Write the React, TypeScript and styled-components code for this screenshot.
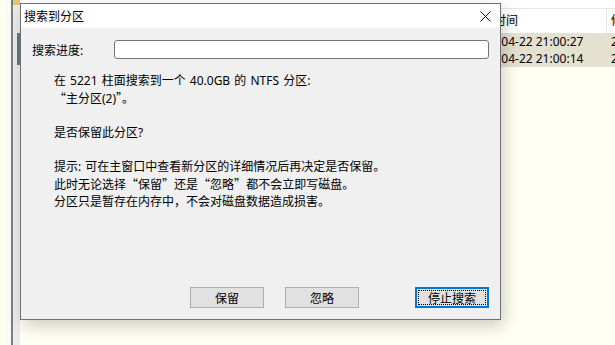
import React from "react";
import styled, { createGlobalStyle } from "styled-components";

const GlobalStyle = createGlobalStyle`
  html, body {
    margin: 0;
    padding: 0;
    width: 615px;
    height: 345px;
    overflow: hidden;
    background: #fffff4;
    font-family: "Noto Sans", "Noto Sans CJK SC", sans-serif;
    font-size: 12px;
    color: #000;
  }
`;

const Desktop = styled.div`
  position: relative;
  display: flex;
  width: 615px;
  height: 345px;
  overflow: hidden;
`;

const LeftPane = styled.div`
  width: 11px;
  background: linear-gradient(to right, #fffff0 0 6px, #fbfbf6 6px);
`;

const Divider = styled.div`
  width: 2px;
  background: #7d7d7d;
`;

const Gutter = styled.div`
  width: 7px;
  background: #ececec;
  display: flex;
  flex-direction: column;
`;

const GutterIcon = styled.div`
  height: 5px;
  width: 7px;
  background: #e7c96a;
`;

const GutterMark = styled.div`
  margin: 28px 0 0 4px;
  height: 32px;
  width: 3px;
  background: #5c7f7c;
`;

const ListView = styled.div`
  flex: 1;
  display: flex;
  flex-direction: column;
  background: #fffff4;
`;

const TopStrip = styled.div`
  height: 8px;
  background: #fff;
  border-bottom: 1px solid #e6e6e6;
`;

const Row = styled.div<{ $header?: boolean }>`
  display: grid;
  grid-template-columns: 446px 141px 1fr;
  height: ${(p) => (p.$header ? "24px" : "17px")};
  line-height: ${(p) => (p.$header ? "24px" : "17px")};
  background: ${(p) => (p.$header ? "#fff" : "#e4e1d1")};
  white-space: nowrap;
`;

const Cell = styled.div<{ $sep?: boolean }>`
  padding-left: 4px;
  overflow: hidden;
  border-right: ${(p) => (p.$sep ? "1px solid #e5e5e5" : "none")};
`;

const Dialog = styled.div`
  position: absolute;
  left: 20px;
  top: 3px;
  width: 479px;
  height: 315px;
  border: 1px solid #707070;
  background: #f0f0f0;
  box-shadow: 3px 6px 16px rgba(0, 0, 0, 0.2);
  display: flex;
  flex-direction: column;
`;

const TitleBar = styled.div`
  height: 24px;
  background: #fff;
  display: flex;
  align-items: center;
  justify-content: space-between;
  padding-left: 3px;
  padding-right: 9px;
`;

const Title = styled.span`
  font-size: 12px;
`;

const CloseIcon = () => (
  <svg width="11" height="11" viewBox="0 0 11 11">
    <path d="M0.5 0.5 L10.5 10.5 M10.5 0.5 L0.5 10.5" stroke="#111" strokeWidth="1" />
  </svg>
);

const Body = styled.div`
  flex: 1;
  display: flex;
  flex-direction: column;
  padding: 12px 11px 11px 11px;
`;

const ProgressRow = styled.div`
  display: flex;
  align-items: center;
  height: 19px;
`;

const Label = styled.span`
  width: 82px;
`;

const ProgressBox = styled.div`
  width: 373px;
  height: 17px;
  background: #fff;
  border: 1px solid #767676;
  border-radius: 3px;
`;

const Message = styled.div`
  margin: 13px 0 0 22px;
  line-height: 17px;
  word-spacing: 1px;
`;

const Para = styled.p`
  margin: 0 0 17px 0;
`;

// curly quotes take a wide cell in the original dialog font
const Q = styled.span`
  font-family: "Noto Sans CJK SC", sans-serif;
`;

const ButtonRow = styled.div`
  margin-top: auto;
  display: flex;
  justify-content: flex-end;
`;

const Button = styled.button<{ $focused?: boolean; $gap?: number }>`
  position: relative;
  width: 74px;
  height: 21px;
  margin-left: ${(p) => p.$gap ?? 0}px;
  padding: 0;
  font-family: "Noto Sans", "Noto Sans CJK SC", sans-serif;
  font-size: 12px;
  color: #000;
  background: #e1e1e1;
  border: ${(p) => (p.$focused ? "2px solid #0078d7" : "1px solid #adadad")};
  box-sizing: border-box;

  &::after {
    content: "";
    display: ${(p) => (p.$focused ? "block" : "none")};
    position: absolute;
    inset: 1px;
    border: 1px dotted #000;
  }
`;

export default function App() {
  return (
    <>
      <GlobalStyle />
      <Desktop>
        <LeftPane />
        <Divider />
        <Gutter>
          <GutterIcon />
          <GutterMark />
        </Gutter>
        <ListView>
          <TopStrip />
          <Row $header>
            <Cell $sep />
            <Cell $sep>创建时间</Cell>
            <Cell>修改时间</Cell>
          </Row>
          <Row>
            <Cell />
            <Cell>2023-04-22 21:00:27</Cell>
            <Cell>2023-04-22 21:00:27</Cell>
          </Row>
          <Row>
            <Cell />
            <Cell>2023-04-22 21:00:14</Cell>
            <Cell>2023-04-22 21:00:14</Cell>
          </Row>
        </ListView>

        <Dialog>
          <TitleBar>
            <Title>搜索到分区</Title>
            <CloseIcon />
          </TitleBar>
          <Body>
            <ProgressRow>
              <Label>搜索进度:</Label>
              <ProgressBox />
            </ProgressRow>
            <Message>
              <Para>
                在 5221 柱面搜索到一个 40.0GB 的 NTFS 分区:
                <br />
                <Q>“</Q>主分区(2)<Q>”</Q>。
              </Para>
              <Para>是否保留此分区?</Para>
              <Para>
                提示: 可在主窗口中查看新分区的详细情况后再决定是否保留。
                <br />
                此时无论选择<Q>“</Q>保留<Q>”</Q>还是<Q>“</Q>忽略<Q>”</Q>都不会立即写磁盘。
                <br />
                分区只是暂存在内存中，不会对磁盘数据造成损害。
              </Para>
            </Message>
            <ButtonRow>
              <Button>保留</Button>
              <Button $gap={21}>忽略</Button>
              <Button $gap={56} $focused>
                停止搜索
              </Button>
            </ButtonRow>
          </Body>
        </Dialog>
      </Desktop>
    </>
  );
}
